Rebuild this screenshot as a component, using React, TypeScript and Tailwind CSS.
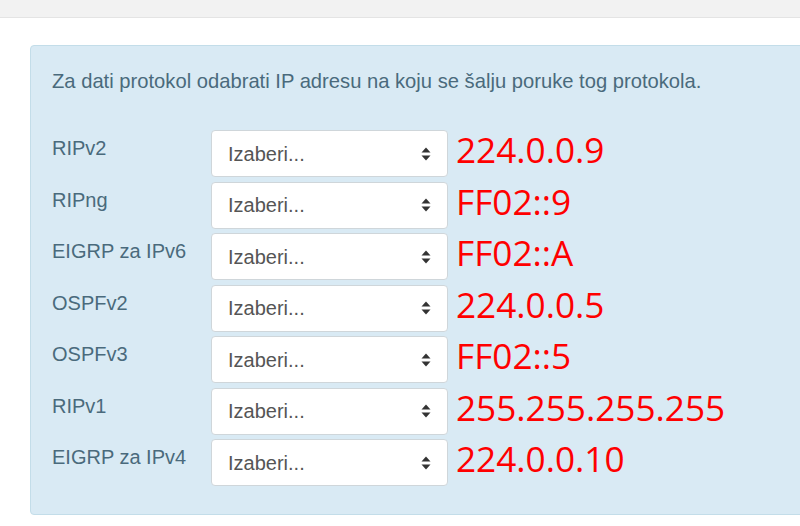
import React from "react";

const rows: [string, string][] = [
  ["RIPv2", "224.0.0.9"],
  ["RIPng", "FF02::9"],
  ["EIGRP za IPv6", "FF02::A"],
  ["OSPFv2", "224.0.0.5"],
  ["OSPFv3", "FF02::5"],
  ["RIPv1", "255.255.255.255"],
  ["EIGRP za IPv4", "224.0.0.10"],
];

function Caret() {
  return (
    <svg width="10" height="14" viewBox="0 0 10 14" className="shrink-0">
      <path d="M5 0.5 L9.5 5.5 L0.5 5.5 Z" fill="#333" />
      <path d="M0.5 8.5 L9.5 8.5 L5 13.5 Z" fill="#333" />
    </svg>
  );
}

export default function App() {
  return (
    <div
      className="w-[800px] h-[526px] bg-white overflow-hidden"
      style={{ fontFamily: '"Liberation Sans", Arial, sans-serif' }}
    >
      <div className="h-[18px] bg-[#f2f2f2] border-b border-[#e4e4e4]" />
      <div className="pl-[30px] pt-[27px]">
        <div className="w-[800px] h-[470px] bg-[#d9eaf4] border border-[#c3dde9] rounded-[4px] pl-[21px] pt-[23px]">
          <p className="text-[20.2px] leading-[24px] text-[#4a6a7c]">
            Za dati protokol odabrati IP adresu na koju se šalju poruke tog protokola.
          </p>
          <div className="mt-[37px] flex flex-col gap-[4.5px]">
            {rows.map(([label, ip]) => (
              <div key={label} className="flex items-start h-[47px]">
                <div className="w-[159px] pt-[6px] text-[20px] leading-[24px] text-[#4a6a7c]">
                  {label}
                </div>
                <div className="w-[237px] h-[47px] bg-white border border-[#cfd6da] rounded-[4px] flex items-center pl-[16px] pr-[16px] justify-between">
                  <span className="text-[20px] text-[#555]">Izaberi...</span>
                  <Caret />
                </div>
                <div
                  className="ml-[8px] mt-[-4px] text-[35.2px] leading-[47px] text-[#ff0000]"
                  style={{ fontFamily: '"Open Sans", sans-serif' }}
                >
                  {ip}
                </div>
              </div>
            ))}
          </div>
        </div>
      </div>
    </div>
  );
}
